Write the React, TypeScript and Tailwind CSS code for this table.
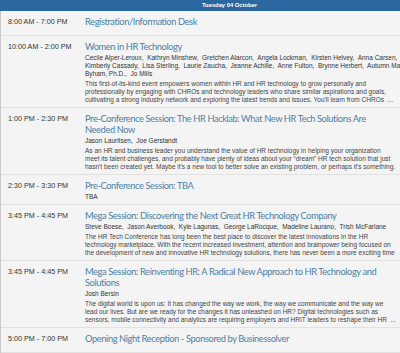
import React from "react";

type Session = {
  time: string;
  title: string[];
  names?: string[];
  desc?: string[];
};

const sessions: Session[] = [
  { time: "8:00 AM - 7:00 PM", title: ["Registration/Information Desk"] },
  {
    time: "10:00 AM - 2:00 PM",
    title: ["Women in HR Technology"],
    names: [
      "Cecile Alper-Leroux,  Kathryn Minshew,  Gretchen Alarcon,  Angela Lockman,  Kirsten Helvey,  Anna Carsen,",
      "Kimberly Cassady,  Lisa Sterling,  Laurie Zaucha,  Jeanne Achille,  Anne Fulton,  Brynne Herbert,  Autumn Manning,  Tacy",
      "Byham, Ph.D.,  Jo Mills",
    ],
    desc: [
      "This first-of-its-kind event empowers women within HR and HR technology to grow personally and",
      "professionally by engaging with CHROs and technology leaders who share similar aspirations and goals,",
      "cultivating a strong industry network and exploring the latest trends and issues. You'll learn from CHROs  ...",
    ],
  },
  {
    time: "1:00 PM - 2:30 PM",
    title: [
      "Pre-Conference Session: The HR Hacklab: What New HR Tech Solutions Are",
      "Needed Now",
    ],
    names: ["Jason Lauritsen,  Joe Gerstandt"],
    desc: [
      "As an HR and business leader you understand the value of HR technology in helping your organization",
      "meet its talent challenges, and probably have plenty of ideas about your \u201cdream\u201d HR tech solution that just",
      "hasn't been created yet. Maybe it's a new tool to better solve an existing problem, or perhaps it's something.",
    ],
  },
  {
    time: "2:30 PM - 3:30 PM",
    title: ["Pre-Conference Session: TBA"],
    names: ["TBA"],
  },
  {
    time: "3:45 PM - 4:45 PM",
    title: ["Mega Session: Discovering the Next Great HR Technology Company"],
    names: [
      "Steve Boese,  Jason Averbook,  Kyle Lagunas,  George LaRocque,  Madeline Laurano,  Trish McFarlane",
    ],
    desc: [
      "The HR Tech Conference has long been the best place to discover the latest innovations in the HR",
      "technology marketplace. With the recent increased investment, attention and brainpower being focused on",
      "the development of new and innovative HR technology solutions, there has never been a more exciting time",
    ],
  },
  {
    time: "3:45 PM - 4:45 PM",
    title: [
      "Mega Session: Reinventing HR: A Radical New Approach to HR Technology and",
      "Solutions",
    ],
    names: ["Josh Bersin"],
    desc: [
      "The digital world is upon us: It has changed the way we work, the way we communicate and the way we",
      "lead our lives. But are we ready for the changes it has unleashed on HR? Digital technologies such as",
      "sensors, mobile connectivity and analytics are requiring employers and HRIT leaders to reshape their HR  ...",
    ],
  },
  {
    time: "5:00 PM - 7:00 PM",
    title: ["Opening Night Reception - Sponsored by Businessolver"],
  },
];

const arial = { fontFamily: '"Liberation Sans", Arial, sans-serif' };
const titleFont = { fontFamily: 'Lato, "Open Sans", sans-serif' };

export default function App() {
  return (
    <div className="w-[400px] h-[353px] overflow-hidden bg-[#f4f4f4]">
      <div className="w-[452px]">
        <div
          className="h-[11px] bg-[#2b67a0] text-white font-bold text-[5.8px] leading-[11px] pl-[202px] whitespace-nowrap"
          style={arial}
        >
          Tuesday 04 October
        </div>
        <div className="border-l border-[#c8c8c8]">
          {sessions.map((s, i) => (
            <div
              key={i}
              className="flex min-h-[25px] border-b border-[#e2e2e2] pt-[5px] pb-[3px]"
            >
              <div
                className="w-[84px] shrink-0 pl-[7px] text-[7.2px] leading-[11px] text-[#333] whitespace-nowrap"
                style={arial}
              >
                {s.time}
              </div>
              <div className="flex-1 min-w-0">
                <div
                  className="text-[9.3px] leading-[11px] tracking-[-0.4px] text-[#4d7fa8] whitespace-nowrap"
                  style={titleFont}
                >
                  {s.title.map((t, j) => (
                    <div key={j}>{t}</div>
                  ))}
                </div>
                {s.names && (
                  <div
                    className="mt-[2px] text-[6.5px] leading-[8px] text-[#333] whitespace-pre"
                    style={arial}
                  >
                    {s.names.map((t, j) => (
                      <div key={j}>{t}</div>
                    ))}
                  </div>
                )}
                {s.desc && (
                  <div
                    className="mt-[2px] text-[6.5px] leading-[8px] text-[#444] whitespace-pre"
                    style={arial}
                  >
                    {s.desc.map((t, j) => (
                      <div key={j}>{t}</div>
                    ))}
                  </div>
                )}
              </div>
            </div>
          ))}
        </div>
      </div>
    </div>
  );
}
